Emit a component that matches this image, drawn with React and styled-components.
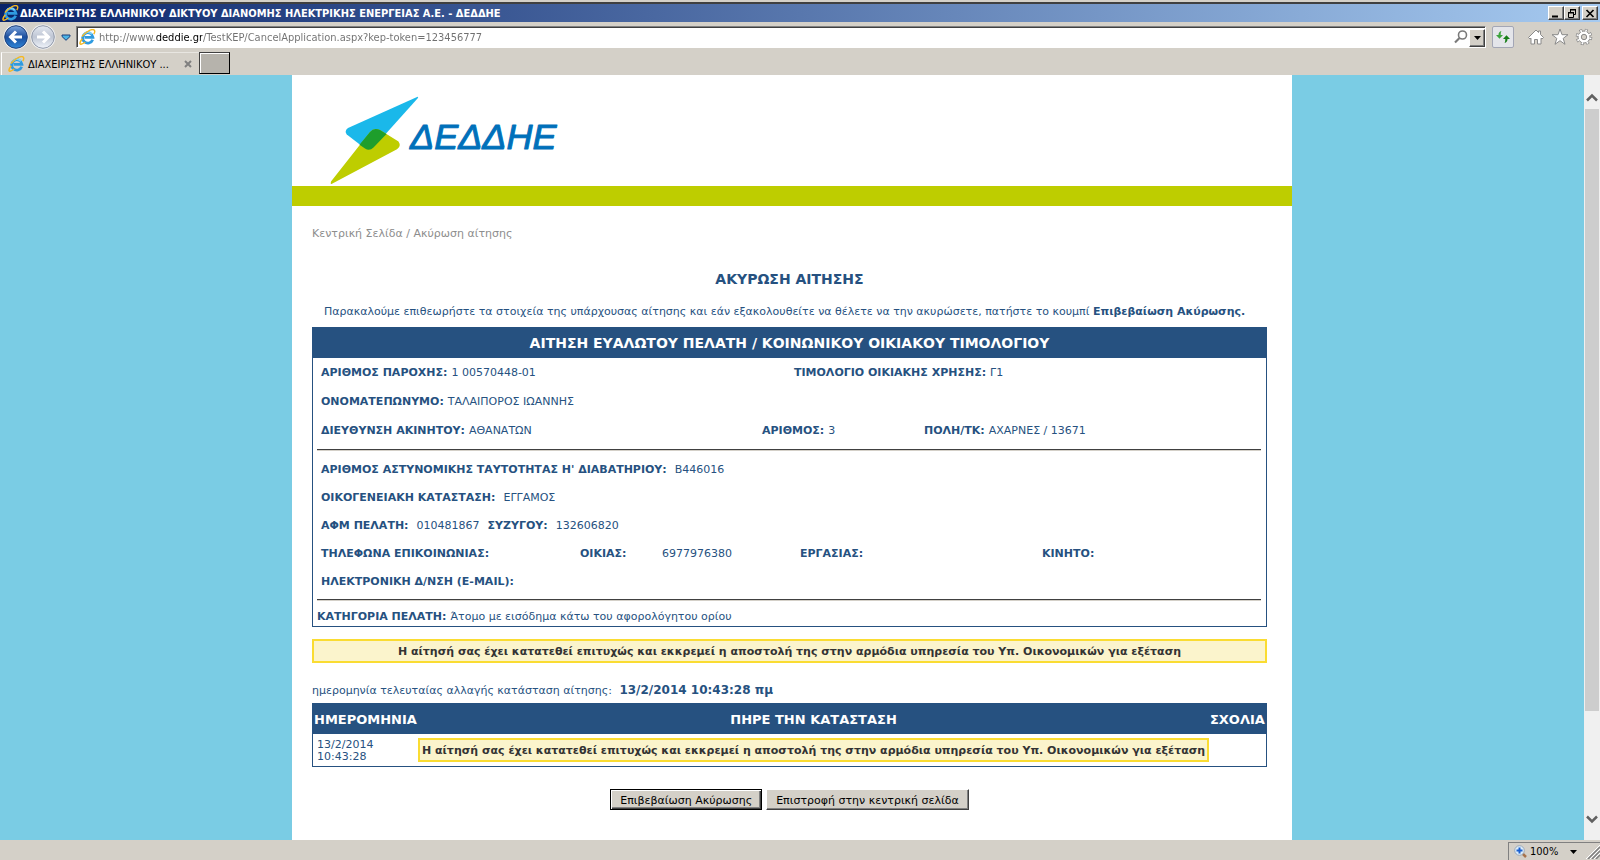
import styled, { createGlobalStyle } from "styled-components";

const GlobalStyle = createGlobalStyle`
  * {
    box-sizing: border-box;
  }
  body {
    margin: 0;
    font-family: Verdana, "DejaVu Sans", sans-serif;
    font-size: 11px;
    color: #265180;
  }
  button, input {
    font-family: inherit;
    font-size: inherit;
  }
`;

const Window = styled.div`
  display: flex;
  flex-direction: column;
  height: 100vh;
  background: #d4d0c8;
`;

/* Browser chrome */
const Chrome = styled.header`
  border-top: 2px solid #d4d0c8;
  font-family: Tahoma, "DejaVu Sans Condensed", "DejaVu Sans", sans-serif;
  color: #000;
`;
const TitleBar = styled.div`
  display: flex;
  align-items: center;
  height: 20px;
  padding: 0 2px;
  border-top: 2px solid #404040;
  background: linear-gradient(to right, #0a246a, #a6caf0);
  color: #fff;
  font-weight: bold;
`;
const WindowTitle = styled.span`
  flex: 1;
  margin-left: 1px;
  white-space: nowrap;
`;
const WindowButton = styled.button`
  display: flex;
  align-items: center;
  justify-content: center;
  width: 16px;
  height: 14px;
  margin-left: ${(props) => (props.$gap ? "2px" : "0")};
  padding: 0;
  border: 1px solid;
  border-color: #fff #404040 #404040 #fff;
  box-shadow: inset -1px -1px #808080;
  background: #d4d0c8;
`;
const NavBar = styled.div`
  display: flex;
  align-items: center;
  height: 30px;
  padding: 0 4px 0 3px;
`;
const IconButton = styled.button`
  display: flex;
  align-items: center;
  justify-content: center;
  width: ${(props) => props.$width || 24}px;
  height: 24px;
  padding: 0;
  border: 0;
  background: none;
`;
const AddressBar = styled.form`
  display: flex;
  align-items: center;
  flex: 1;
  height: 22px;
  margin: 0 6px 0 2px;
  padding-left: 2px;
  border: 1px solid;
  border-color: #808080 #fff #fff #808080;
  box-shadow: inset 1px 1px #404040;
  background: #fff;
`;
/* the domain part of the url stays black */
const AddressInput = styled.input`
  flex: 1;
  min-width: 0;
  height: 20px;
  margin-left: 3px;
  padding: 1px 0 0;
  border: 0;
  outline: 0;
  color: transparent;
  background: linear-gradient(
    to right,
    #707070 57px,
    #000 57px,
    #000 103px,
    #707070 103px
  );
  background-clip: text;
`;
const DropButton = styled.button`
  display: flex;
  align-items: center;
  justify-content: center;
  width: 16px;
  height: 18px;
  margin-top: 1px;
  padding: 0;
  border: 1px solid;
  border-color: #fff #404040 #404040 #fff;
  box-shadow: inset -1px -1px #808080;
  background: #d4d0c8;
`;
const RefreshButton = styled.button`
  display: flex;
  align-items: center;
  justify-content: center;
  width: 22px;
  height: 22px;
  margin-right: 10px;
  padding: 0;
  border: 1px solid #a3a6b5;
  border-radius: 2px;
  background: #e4e5ea;
`;
const TabBar = styled.div`
  display: flex;
  height: 23px;
  padding-left: 1px;
`;
const Tab = styled.div`
  display: flex;
  align-items: center;
  width: 198px;
  padding: 0 6px;
  border-left: 1px solid #fff;
  border-top: 1px solid #e8e6e1;
`;
const TabTitle = styled.span`
  flex: 1;
  margin-left: 3px;
  white-space: nowrap;
`;
const NewTab = styled.button`
  width: 31px;
  height: 22px;
  padding: 0;
  border: 1px solid;
  border-color: #404040 #000 #000 #404040;
  box-shadow: inset 1px 1px #fff;
  background: #b6b3ac;
`;

/* Page */
const Viewport = styled.div`
  display: flex;
  flex: 1;
  min-height: 0;
`;
const Backdrop = styled.div`
  display: flex;
  justify-content: center;
  flex: 1;
  overflow: hidden;
  background: #7acce4;
`;
const Page = styled.main`
  width: 100%;
  max-width: 1000px;
  background: #fff;
`;
const Banner = styled.div`
  padding: 20px 0 0 36px;
  border-bottom: 20px solid #becd00;
  svg {
    display: block;
  }
`;
const Content = styled.div`
  padding: 21px 25px 20px 20px;
`;
const Breadcrumb = styled.nav`
  line-height: 14px;
  color: #8d8d8d;
  a {
    color: inherit;
    text-decoration: none;
  }
`;
const PageTitle = styled.h1`
  margin: 30px 0 18px;
  font-size: 14px;
  line-height: 16px;
  text-align: center;
`;
const Intro = styled.p`
  margin: 0 0 8px 12px;
  line-height: 14px;
`;
const Panel = styled.section`
  border: 1px solid #265180;
`;
const PanelTitle = styled.h2`
  margin: 0;
  background: #265180;
  color: #fff;
  font-size: 14px;
  line-height: 30px;
  text-align: center;
`;
const Group = styled.div`
  margin: 0 5px 0 4px;
  padding: ${(props) => props.$padding || "0 4px"};
  border-top: ${(props) => (props.$divided ? "1px solid #404040" : "0")};
  box-shadow: ${(props) => (props.$divided ? "inset 0 1px #d4d0c8" : "none")};
`;
const Row = styled.div`
  display: grid;
  grid-template-columns: ${(props) => props.$columns || "1fr"};
  line-height: ${(props) => props.$height || 28}px;
`;
const Value = styled.span`
  margin: 0 ${(props) => (props.$wide ? 8 : 4)}px;
`;
const Notice = styled.div`
  margin-top: ${(props) => (props.$spaced ? "12px" : "0")};
  padding-top: 2px;
  border: 2px solid #fadc32;
  background: #fbf4cc;
  color: #333;
  font-weight: bold;
  line-height: 18px;
  text-align: center;
  white-space: nowrap;
`;
const LastChange = styled.p`
  margin: 20px 0 5px;
  line-height: 14px;
  b {
    margin-left: 4px;
    font-size: 12px;
  }
`;
const History = styled.table`
  width: 100%;
  border: 1px solid #265180;
  border-collapse: collapse;
  th {
    padding: 2px 1px 0;
    background: #265180;
    color: #fff;
    font-size: 13px;
    line-height: 28px;
  }
  th:first-child {
    text-align: left;
  }
  td {
    padding: 4px 0;
    line-height: 12px;
  }
  td:first-child {
    padding: 5px 0 3px 4px;
  }
`;
const Actions = styled.div`
  display: flex;
  justify-content: center;
  gap: 4px;
  margin-top: 22px;
`;
const ActionButton = styled.button`
  height: 21px;
  padding: 1px 9px 0;
  border: 1px solid;
  border-color: ${(props) => (props.$primary ? "#000" : "#fff #404040 #404040 #fff")};
  box-shadow: ${(props) =>
    props.$primary
      ? "inset 1px 1px #fff, inset -1px -1px #404040, inset -2px -2px #808080"
      : "inset -1px -1px #808080"};
  background: #d4d0c8;
  color: #000;
`;

const ScrollBar = styled.div`
  display: flex;
  flex-direction: column;
  width: 16px;
  background: #f0f0f0;
`;
const ScrollButton = styled.button`
  display: flex;
  align-items: center;
  justify-content: center;
  height: 34px;
  padding: ${(props) => (props.$down ? "0 0 8px" : "10px 0 0")};
  border: 0;
  background: none;
`;
const Track = styled.div`
  flex: 1;
  padding: 0 1px;
`;
const Thumb = styled.div`
  height: 86.4%;
  background: #cdcdcd;
`;
const StatusBar = styled.footer`
  display: flex;
  justify-content: flex-end;
  height: 20px;
  padding-top: 2px;
  font-family: Tahoma, "DejaVu Sans Condensed", "DejaVu Sans", sans-serif;
`;
const ZoomButton = styled.button`
  display: flex;
  align-items: center;
  gap: 3px;
  width: 92px;
  padding: 0 0 0 5px;
  border: 0;
  border-top: 1px solid #808080;
  border-left: 1px solid #808080;
  background: none;
  color: #000;
`;
const ZoomLabel = styled.span`
  flex: 1;
  text-align: left;
`;
const Grip = styled.svg`
  margin-left: 6px;
`;

function IeIcon() {
  return (
    <svg width="17" height="16" viewBox="0 0 17 16" aria-hidden="true">
      <path
        d="M13.700 10.800A5.200 5.200 0 1 1 14 8.400H5.500"
        fill="none"
        stroke="#2f9be0"
        strokeWidth="2.700"
      />
      <path
        d="M12.800 5.200A5 5 0 0 0 4.300 6"
        fill="none"
        stroke="#7fd0f7"
        strokeWidth="1.700"
      />
      <path
        d="M3.300 9.800C.8 13 .2 15.400 2 15.200c1.300-.2 2.800-1 4.300-2.200M3 7.500C6.500 3 12.700-.5 15 .9c1.200.8.9 2.400-.2 4.300"
        fill="none"
        stroke="#f5b820"
        strokeWidth="1.400"
      />
    </svg>
  );
}

function ArrowBall({ back }) {
  return (
    <svg width="26" height="26" viewBox="0 0 26 26" aria-hidden="true">
      <defs>
        <linearGradient id={back ? "ballBack" : "ballForward"} x2="0" y2="1">
          <stop offset="0" stopColor={back ? "#7da4dc" : "#e3e8f1"} />
          <stop offset=".5" stopColor={back ? "#1b4f9f" : "#bfc6d4"} />
          <stop offset="1" stopColor={back ? "#2f86d8" : "#f0f4fa"} />
        </linearGradient>
      </defs>
      <circle cx="13" cy="13" r="12.500" fill="#f4f5f7" />
      <circle
        cx="13"
        cy="13"
        r="11.300"
        fill={back ? "url(#ballBack)" : "url(#ballForward)"}
        stroke={back ? "#1d3f7a" : "#8e96a6"}
      />
      <path
        d={back ? "M13 7.500 7.500 13 13 18.500M8 13H19" : "M13 7.500 18.500 13 13 18.500M18 13H7"}
        fill="none"
        stroke="#fff"
        strokeWidth="3"
      />
    </svg>
  );
}

function Caret({ blue }) {
  return blue ? (
    <svg width="10" height="7" viewBox="0 0 10 7" aria-hidden="true">
      <path d="M1 1H9V2.500L5 6.300 1 2.500Z" fill="#4cb4e6" stroke="#1a3f7c" />
    </svg>
  ) : (
    <svg width="7" height="4" viewBox="0 0 7 4" aria-hidden="true">
      <path d="M0 0H7L3.500 4Z" fill="#000" />
    </svg>
  );
}

function Chevron({ down }) {
  return (
    <svg width="12" height="9" viewBox="0 0 12 9" aria-hidden="true">
      <path
        d={down ? "M1 1.500 6 6.500 11 1.500" : "M1 7.500 6 2.500 11 7.500"}
        fill="none"
        stroke="#606060"
        strokeWidth="2.500"
      />
    </svg>
  );
}

function Logo() {
  return (
    <svg width="240" height="91" viewBox="0 0 240 91" role="img" aria-label="ΔΕΔΔΗΕ">
      <path
        d="M88.500 2.200Q91.300 1 89.500 3.600L45.500 52.500Q41.500 56.500 37 53.500L18.800 39.500Q16 36 20 33Z"
        fill="#1ab8ea"
      />
      <path
        d="M4 88.800Q2 90 3 86.500L42 37Q46 32 52 35L70.500 46.500Q73.500 51 69 54.200Z"
        fill="#becd00"
      />
      <path
        d="M31.500 49.800 42 37Q46 32 52 35L58.500 38.900 45.500 52.500Q41.500 56.500 37 53.500Z"
        fill="#1e9e2c"
      />
      <text
        x="82"
        y="54"
        fill="#0070ba"
        stroke="#0070ba"
        strokeWidth="1"
        strokeLinejoin="round"
        fontFamily='"Liberation Sans", Arial, sans-serif'
        fontStyle="italic"
        fontSize="36"
      >
        ΔΕΔΔΗΕ
      </text>
    </svg>
  );
}

const NOTICE =
  "Η αίτησή σας έχει κατατεθεί επιτυχώς και εκκρεμεί η αποστολή της στην αρμόδια υπηρεσία του Υπ. Οικονομικών για εξέταση";

function BrowserChrome() {
  return (
    <Chrome>
      <TitleBar>
        <IeIcon />
        <WindowTitle>
          ΔΙΑΧΕΙΡΙΣΤΗΣ ΕΛΛΗΝΙΚΟΥ ΔΙΚΤΥΟΥ ΔΙΑΝΟΜΗΣ ΗΛΕΚΤΡΙΚΗΣ ΕΝΕΡΓΕΙΑΣ Α.Ε. - ΔΕΔΔΗΕ
        </WindowTitle>
        <WindowButton aria-label="Minimize">
          <svg width="10" height="9">
            <path d="M1 7.500H7" stroke="#000" strokeWidth="2" />
          </svg>
        </WindowButton>
        <WindowButton aria-label="Restore">
          <svg width="10" height="9" fill="none" stroke="#000">
            <path d="M3 1H9M3.500 1V3M8.500 1V5.500H6M1 4H7M1.500 4V8.500H6.500V4" />
            <path d="M3 .5H9M1 3.500H7" />
          </svg>
        </WindowButton>
        <WindowButton $gap aria-label="Close">
          <svg width="10" height="9">
            <path d="M1.500 1 8.500 8M8.500 1 1.500 8" stroke="#000" strokeWidth="1.700" />
          </svg>
        </WindowButton>
      </TitleBar>
      <NavBar>
        <IconButton $width={26} aria-label="Back">
          <ArrowBall back />
        </IconButton>
        <IconButton $width={28} aria-label="Forward">
          <ArrowBall />
        </IconButton>
        <IconButton $width={17} aria-label="Recent pages">
          <Caret blue />
        </IconButton>
        <AddressBar>
          <IeIcon />
          <AddressInput
            aria-label="Address"
            defaultValue="http://www.deddie.gr/TestKEP/CancelApplication.aspx?kep-token=123456777"
          />
          <IconButton $width={17} type="button" aria-label="Search">
            <svg width="14" height="14" fill="none" stroke="#7a7a7a">
              <circle cx="8.500" cy="5" r="4" strokeWidth="1.600" />
              <path d="M5.500 8 1 12.500" strokeWidth="2.200" />
            </svg>
          </IconButton>
          <DropButton type="button" aria-label="Show addresses">
            <Caret />
          </DropButton>
        </AddressBar>
        <RefreshButton aria-label="Refresh">
          <svg width="16" height="16">
            <path
              d="M6.500 2C4.300 2.500 3.500 4 3.500 6H1L4.500 9.800 8 6H5.700C5.700 4.500 5.800 3 6.500 2Z"
              fill="#3da33d"
            />
            <path
              d="M9.500 14C11.700 13.500 12.500 12 12.500 10H15L11.500 6.200 8 10H10.300C10.300 11.500 10.200 13 9.500 14Z"
              fill="#177d17"
            />
          </svg>
        </RefreshButton>
        <IconButton aria-label="Home">
          <svg width="18" height="18" fill="#fff" stroke="#8a8a8a">
            <path d="M9 2 1.500 9.500 3 11 4 10.200V16H7.500V11.500H10.500V16H14V10.200L15 11 16.500 9.500 13.500 6.500V3H11.500V4.500Z" />
          </svg>
        </IconButton>
        <IconButton aria-label="Favorites">
          <svg width="18" height="18" fill="#fff" stroke="#8a8a8a">
            <path d="M9 1 11 6.700H17L12.200 10.400 14 16.300 9 12.700 4 16.300 5.800 10.400 1 6.700H7Z" />
          </svg>
        </IconButton>
        <IconButton aria-label="Tools">
          <svg width="18" height="18" viewBox="0 0 18 18">
            <circle cx="9" cy="9" r="6.500" fill="none" stroke="#8a8a8a" strokeWidth="3.600" strokeDasharray="2.700 2.405" />
            <circle cx="9" cy="9" r="6" fill="#fff" stroke="#8a8a8a" />
            <circle cx="9" cy="9" r="6.500" fill="none" stroke="#fff" strokeWidth="2.200" strokeDasharray="1.500 3.605" strokeDashoffset="-.6" />
            <circle cx="9" cy="9" r="2.700" fill="#d4d0c8" stroke="#8a8a8a" />
          </svg>
        </IconButton>
      </NavBar>
      <TabBar>
        <Tab>
          <IeIcon />
          <TabTitle>ΔΙΑΧΕΙΡΙΣΤΗΣ ΕΛΛΗΝΙΚΟΥ ...</TabTitle>
          <IconButton $width={10} aria-label="Close tab">
            <svg width="8" height="8">
              <path d="M1 1 7 7M7 1 1 7" stroke="#808080" strokeWidth="2" />
            </svg>
          </IconButton>
        </Tab>
        <NewTab aria-label="New tab" />
      </TabBar>
    </Chrome>
  );
}

function Application() {
  return (
    <Panel>
      <PanelTitle>ΑΙΤΗΣΗ ΕΥΑΛΩΤΟΥ ΠΕΛΑΤΗ / ΚΟΙΝΩΝΙΚΟΥ ΟΙΚΙΑΚΟΥ ΤΙΜΟΛΟΓΙΟΥ</PanelTitle>
      <Group $padding="0 4px 4px">
        <Row $height={29} $columns="475fr 465fr">
          <div>
            <b>ΑΡΙΘΜΟΣ ΠΑΡΟΧΗΣ:</b>
            <Value>1 00570448-01</Value>
          </div>
          <div>
            <b>ΤΙΜΟΛΟΓΙΟ ΟΙΚΙΑΚΗΣ ΧΡΗΣΗΣ:</b>
            <Value>Γ1</Value>
          </div>
        </Row>
        <Row $height={29}>
          <div>
            <b>ΟΝΟΜΑΤΕΠΩΝΥΜΟ:</b>
            <Value>ΤΑΛΑΙΠΟΡΟΣ ΙΩΑΝΝΗΣ</Value>
          </div>
        </Row>
        <Row $height={29} $columns="441fr 162fr 333fr">
          <div>
            <b>ΔΙΕΥΘΥΝΣΗ ΑΚΙΝΗΤΟΥ:</b>
            <Value>ΑΘΑΝΑΤΩΝ</Value>
          </div>
          <div>
            <b>ΑΡΙΘΜΟΣ:</b>
            <Value>3</Value>
          </div>
          <div>
            <b>ΠΟΛΗ/ΤΚ:</b>
            <Value>ΑΧΑΡΝΕΣ / 13671</Value>
          </div>
        </Row>
      </Group>
      <Group $divided $padding="6px 4px 3px">
        <Row>
          <div>
            <b>ΑΡΙΘΜΟΣ ΑΣΤΥΝΟΜΙΚΗΣ ΤΑΥΤΟΤΗΤΑΣ Η' ΔΙΑΒΑΤΗΡΙΟΥ:</b>
            <Value $wide>Β446016</Value>
          </div>
        </Row>
        <Row>
          <div>
            <b>ΟΙΚΟΓΕΝΕΙΑΚΗ ΚΑΤΑΣΤΑΣΗ:</b>
            <Value $wide>ΕΓΓΑΜΟΣ</Value>
          </div>
        </Row>
        <Row>
          <div>
            <b>ΑΦΜ ΠΕΛΑΤΗ:</b>
            <Value $wide>010481867</Value>
            <b>ΣΥΖΥΓΟΥ:</b>
            <Value $wide>132606820</Value>
          </div>
        </Row>
        <Row $columns="259fr 82fr 138fr 242fr 215fr">
          <b>ΤΗΛΕΦΩΝΑ ΕΠΙΚΟΙΝΩΝΙΑΣ:</b>
          <b>ΟΙΚΙΑΣ:</b>
          <span>6977976380</span>
          <b>ΕΡΓΑΣΙΑΣ:</b>
          <b>ΚΙΝΗΤΟ:</b>
        </Row>
        <Row>
          <b>ΗΛΕΚΤΡΟΝΙΚΗ Δ/ΝΣΗ (E-MAIL):</b>
        </Row>
      </Group>
      <Group $divided $padding="8px 0 0">
        <Row $height={18}>
          <div>
            <b>ΚΑΤΗΓΟΡΙΑ ΠΕΛΑΤΗ:</b>
            <Value>Άτομο με εισόδημα κάτω του αφορολόγητου ορίου</Value>
          </div>
        </Row>
      </Group>
    </Panel>
  );
}

export default function App() {
  return (
    <Window>
      <GlobalStyle />
      <BrowserChrome />
      <Viewport>
        <Backdrop>
          <Page>
            <Banner>
              <Logo />
            </Banner>
            <Content>
              <Breadcrumb>
                <a href="#home">Κεντρική Σελίδα</a> / Ακύρωση αίτησης
              </Breadcrumb>
              <PageTitle>ΑΚΥΡΩΣΗ ΑΙΤΗΣΗΣ</PageTitle>
              <Intro>
                Παρακαλούμε επιθεωρήστε τα στοιχεία της υπάρχουσας αίτησης και εάν
                εξακολουθείτε να θέλετε να την ακυρώσετε, πατήστε το κουμπί{" "}
                <b>Επιβεβαίωση Ακύρωσης.</b>
              </Intro>
              <Application />
              <Notice $spaced>{NOTICE}</Notice>
              <LastChange>
                ημερομηνία τελευταίας αλλαγής κατάσταση αίτησης:{" "}
                <b>13/2/2014 10:43:28 πμ</b>
              </LastChange>
              <History>
                <thead>
                  <tr>
                    <th>ΗΜΕΡΟΜΗΝΙΑ</th>
                    <th>ΠΗΡΕ ΤΗΝ ΚΑΤΑΣΤΑΣΗ</th>
                    <th>ΣΧΟΛΙΑ</th>
                  </tr>
                </thead>
                <tbody>
                  <tr>
                    <td>
                      13/2/2014
                      <br />
                      10:43:28
                    </td>
                    <td>
                      <Notice>{NOTICE}</Notice>
                    </td>
                    <td />
                  </tr>
                </tbody>
              </History>
              <Actions>
                <ActionButton $primary>Επιβεβαίωση Ακύρωσης</ActionButton>
                <ActionButton>Επιστροφή στην κεντρική σελίδα</ActionButton>
              </Actions>
            </Content>
          </Page>
        </Backdrop>
        <ScrollBar>
          <ScrollButton aria-label="Scroll up">
            <Chevron />
          </ScrollButton>
          <Track>
            <Thumb />
          </Track>
          <ScrollButton $down aria-label="Scroll down">
            <Chevron down />
          </ScrollButton>
        </ScrollBar>
      </Viewport>
      <StatusBar>
        <ZoomButton>
          <svg width="13" height="13" viewBox="0 0 13 13" aria-hidden="true">
            <path d="M8 8 12 12" stroke="#a8734c" strokeWidth="2.500" />
            <circle cx="5.500" cy="5.500" r="4.800" fill="#dcecf8" stroke="#9aa8b8" />
            <path d="M5.500 2.500V8.500M2.500 5.500H8.500" stroke="#1a5fd0" strokeWidth="2" />
          </svg>
          <ZoomLabel>100%</ZoomLabel>
          <Caret />
          <Grip width="14" height="14" aria-hidden="true">
            <path d="M2 14 14 2M6 14 14 6M10 14 14 10" stroke="#808080" strokeWidth="1.500" />
            <path d="M0 14 14 0M4 14 14 4M8 14 14 8" stroke="#fff" />
          </Grip>
        </ZoomButton>
      </StatusBar>
    </Window>
  );
}
